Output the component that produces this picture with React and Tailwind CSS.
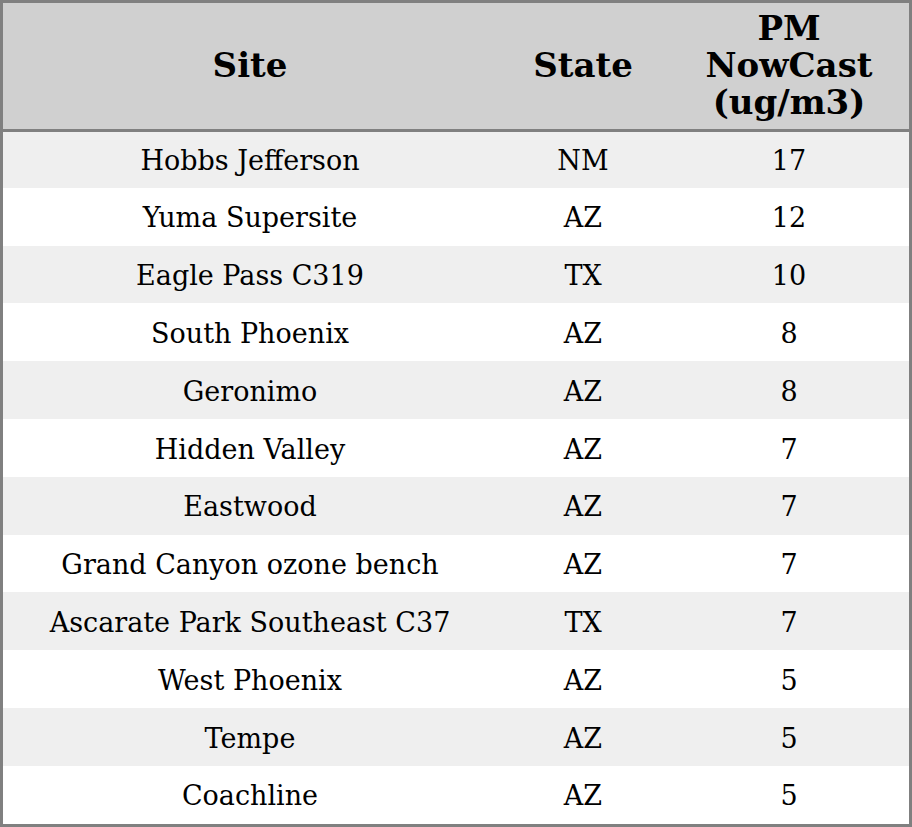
import React from 'react';

const rows = [
  ['Hobbs Jefferson', 'NM', 17],
  ['Yuma Supersite', 'AZ', 12],
  ['Eagle Pass C319', 'TX', 10],
  ['South Phoenix', 'AZ', 8],
  ['Geronimo', 'AZ', 8],
  ['Hidden Valley', 'AZ', 7],
  ['Eastwood', 'AZ', 7],
  ['Grand Canyon ozone bench', 'AZ', 7],
  ['Ascarate Park Southeast C37', 'TX', 7],
  ['West Phoenix', 'AZ', 5],
  ['Tempe', 'AZ', 5],
  ['Coachline', 'AZ', 5],
];

const App = () => {
  return (
    <div className="w-[912px] h-[827px] border-[3px] border-[#808080] bg-white font-['DejaVu_Serif',serif] text-black">
      <table className="w-full table-fixed border-collapse">
        <colgroup>
          <col className="w-[494px]" />
          <col className="w-[172px]" />
          <col className="w-[240px]" />
        </colgroup>
        <thead className="bg-[#d0d0d0]">
          <tr className="h-[127px]">
            <th className="border-b-[3px] border-[#808080] text-[34px] font-bold leading-[37px] text-center">Site</th>
            <th className="border-b-[3px] border-[#808080] text-[34px] font-bold leading-[37px] text-center">State</th>
            <th className="border-b-[3px] border-[#808080] text-[34px] font-bold leading-[37px] text-center p-0">
              PM
              <br />
              NowCast
              <br />
              (ug/m3)
            </th>
          </tr>
        </thead>
        <tbody>
          {rows.map(([site, state, pm], i) => (
            <tr key={site} className={`h-[57.8px] ${i % 2 === 0 ? 'bg-[#efefef]' : 'bg-white'}`}>
              <td className="text-center text-[27px] p-0 pt-[4px]">{site}</td>
              <td className="text-center text-[27px] p-0 pt-[4px]">{state}</td>
              <td className="text-center text-[27px] p-0 pt-[4px]">{pm}</td>
            </tr>
          ))}
        </tbody>
      </table>
    </div>
  );
};

export default App;
